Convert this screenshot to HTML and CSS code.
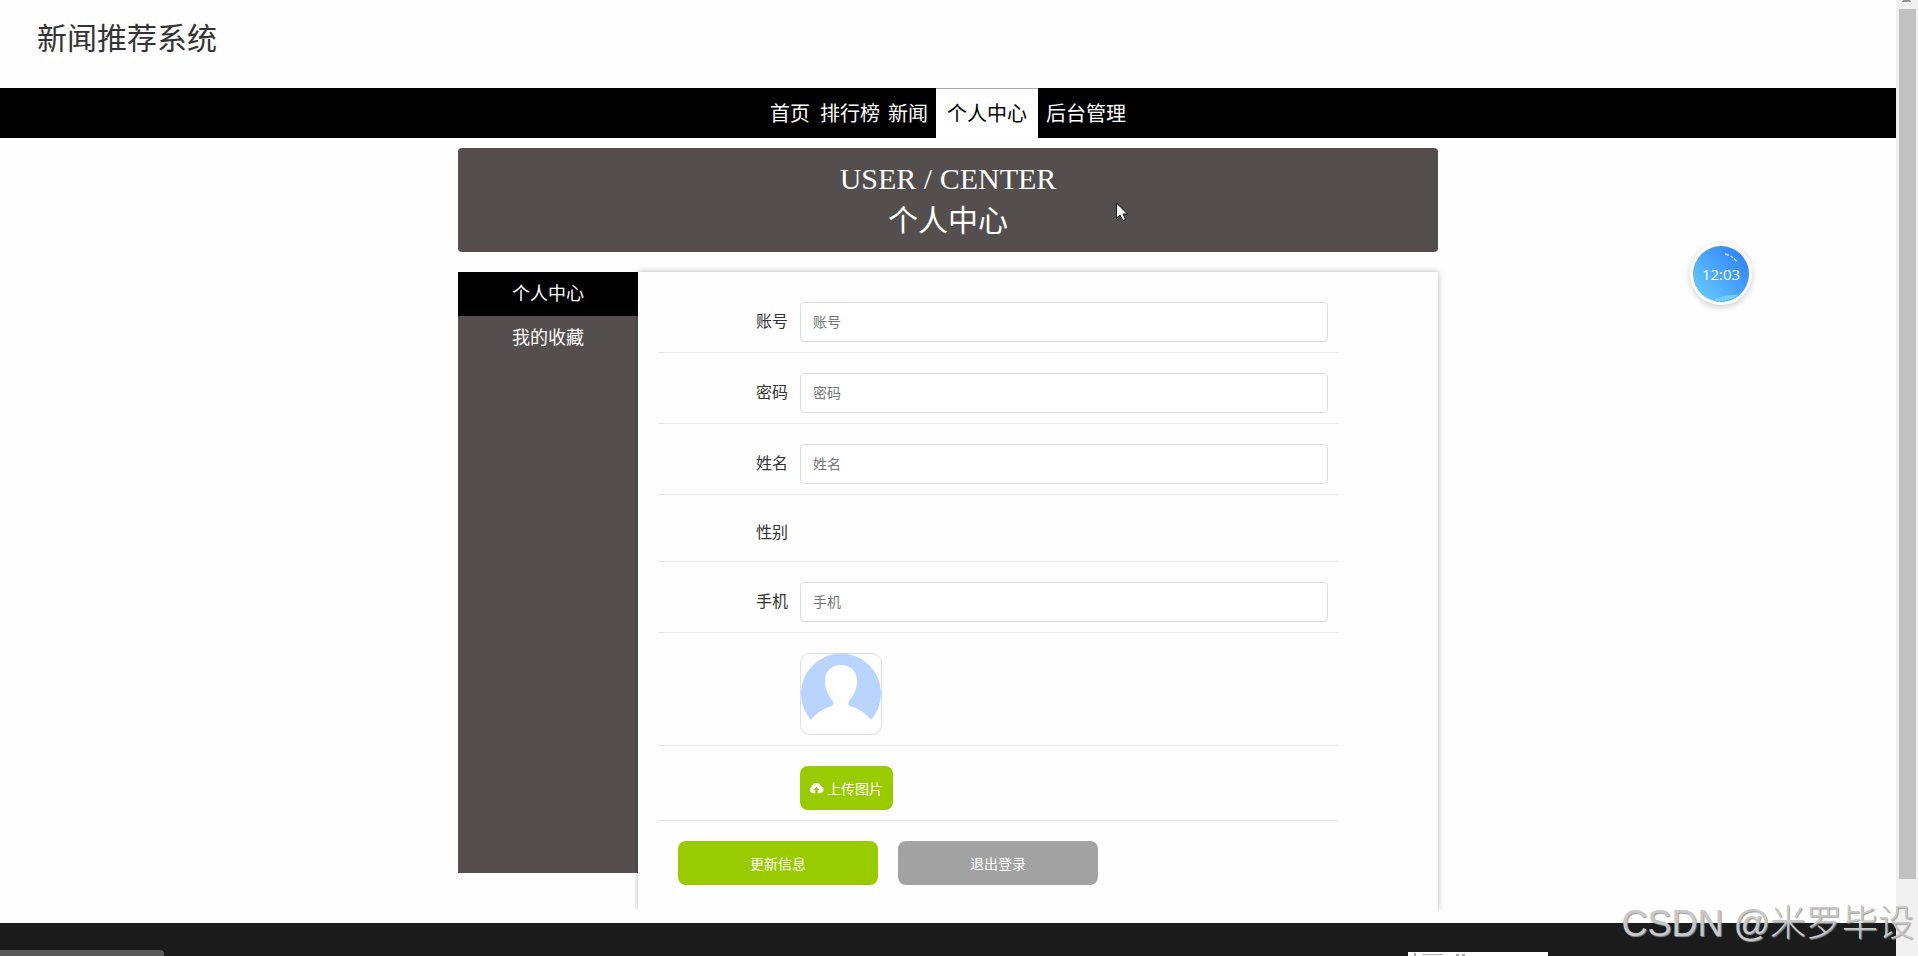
FILE: index.html
```html
<!DOCTYPE html>
<html lang="zh-CN">
<head>
<meta charset="utf-8">
<title>新闻推荐系统</title>
<link rel="stylesheet" href="styles.css">
</head>
<body>
<div class="window">
  <div class="page">
    <header class="header"><h1 class="site-title">新闻推荐系统</h1></header>
    <nav class="nav">
      <a class="nav-link" href="#">首页</a>
      <a class="nav-link" href="#">排行榜</a>
      <a class="nav-link" href="#">新闻</a>
      <a class="nav-link active" href="#">个人中心</a>
      <a class="nav-link" href="#">后台管理</a>
    </nav>
    <main class="container">
      <h2 class="banner"><span>USER / CENTER</span><span>个人中心</span></h2>
      <div class="columns">
        <aside class="side">
          <a class="side-link active" href="#">个人中心</a>
          <a class="side-link" href="#">我的收藏</a>
        </aside>
        <form class="panel">
          <div class="row"><label class="label" for="account">账号</label><input class="field" id="account" type="text" placeholder="账号"></div>
          <div class="row"><label class="label" for="password">密码</label><input class="field" id="password" type="password" placeholder="密码"></div>
          <div class="row"><label class="label" for="name">姓名</label><input class="field" id="name" type="text" placeholder="姓名"></div>
          <div class="row gender"><span class="label">性别</span></div>
          <div class="row"><label class="label" for="phone">手机</label><input class="field" id="phone" type="text" placeholder="手机"></div>
          <div class="row indent">
            <svg class="avatar" viewBox="0 0 80 80" role="img" aria-label="头像">
              <path fill="#b8d4ff" d="M10 66A40 40 0 1 1 70 66C65 59 57 54 49 52Q46 50 48 47C53 41 56 35 56 27C56 17 49 11 40 11S24 17 24 27C24 35 27 41 32 47Q33 50 31 52C23 54 15 59 10 66Z"/>
            </svg>
          </div>
          <div class="row indent">
            <button class="upload" type="button">
              <svg class="cloud" viewBox="0 0 16 12" aria-hidden="true"><path fill="#fff" d="M4 11.500A3.700 3.700 0 0 1 2.700 4.600A5.400 5.400 0 0 1 13 4.300A3.700 3.700 0 0 1 12.200 11.500H9.300V8.500H11.500L8 4.700L4.500 8.500H6.700V11.500Z"/></svg>
              上传图片
            </button>
          </div>
          <div class="actions">
            <button class="action" type="button">更新信息</button>
            <button class="action muted" type="button">退出登录</button>
          </div>
        </form>
      </div>
    </main>
    <footer class="footer"></footer>
  </div>
  <div class="scrollbar">
    <svg class="scroll-arrow" viewBox="0 0 10 3" aria-hidden="true"><path fill="#909090" d="M1 0H8V1H9V2H0V1H1Z"/></svg>
    <div class="thumb"></div>
  </div>
</div>
<div class="clock">
  <svg class="clock-face" viewBox="0 0 56 56" aria-hidden="true">
    <defs>
      <linearGradient id="sky" x1="0.1" y1="0.9" x2="0.9" y2="0.2"><stop offset="0" stop-color="#66c9fd"/><stop offset="1" stop-color="#3285f9"/></linearGradient>
      <clipPath id="disc"><circle cx="28" cy="28" r="28"/></clipPath>
    </defs>
    <g clip-path="url(#disc)">
      <rect width="56" height="56" fill="url(#sky)"/>
      <path fill="#71d0fb" d="M16 56C26 51 35 48 48 49V56Z"/>
      <path fill="none" stroke="#3c9fe9" stroke-dasharray="2 1" d="M24 56Q38 55 48 48"/>
      <path fill="none" stroke="#c4e2ff" stroke-width="1.500" stroke-dasharray="4 2 3 1" d="M32 8Q40 10 44 16"/>
    </g>
  </svg>
  <span class="clock-time">12:03</span>
</div>
<svg class="cursor" viewBox="0 0 12 19" aria-hidden="true"><path fill="#fff" stroke="#111" d="M.5 1V16.500L4 13L7 18.500L9.500 17.500L7 12H11.500Z"/></svg>
<div class="status"></div>
<div class="tip"><svg class="tip-marks" viewBox="0 0 60 4" aria-hidden="true"><path fill="#aaa" d="M6 1H8V4H6ZM15 2H35V3H15ZM48 2H51V4H48ZM54 2H57V4H54Z"/></svg></div>
<div class="watermark">CSDN @米罗毕设</div>
</body>
</html>
```

FILE: styles.css
```css
* { box-sizing: border-box; }
body {
  margin: 0;
  background: #fefefe;
  color: #333;
  font-family: "Liberation Sans", "Noto Sans CJK SC", sans-serif;
  font-size: 16px;
}
a { text-decoration: none; }
button, input { font-family: inherit; font-size: 14px; }
.window { display: flex; height: 100vh; overflow: hidden; }
.page { flex: 1; display: flex; flex-direction: column; }
.header { height: 88px; padding: 16px 37px; }
.site-title { margin: 0; font-size: 30px; font-weight: 400; line-height: 46px; }
.nav { display: flex; flex: none; justify-content: center; gap: 8px; height: 50px; background: #000; }
.nav-link { color: #fff; font-size: 20px; line-height: 52px; }
.nav-link:first-child { margin-right: 2px; }
.nav-link.active { padding: 0 11px; background: #fff; color: #000; border-top: 1px solid #aaa; line-height: 50px; }
.container { width: 980px; max-width: 100%; margin: 10px auto 13px; }
.banner {
  display: flex; flex-direction: column; align-items: center;
  margin: 0 0 20px; padding: 10px;
  border-radius: 4px; background: #544e4e; color: #fff;
  font: 400 30px/42px "Liberation Serif", "Noto Sans CJK SC", serif;
}
.columns { display: flex; align-items: flex-start; }
.side { width: 180px; min-height: 601px; background: #544e4e; }
.side-link { display: block; color: #fff; font-size: 18px; line-height: 44px; text-align: center; }
.side-link.active { background: #000; }
.panel {
  flex: 1; padding: 10px 100px 25px 20px;
  box-shadow: 0 0 6px rgba(0, 0, 0, .3);
  background: #fefefe;
  clip-path: inset(-10px -10px 0 -3px);
}
.row { display: flex; align-items: center; padding: 20px 10px 10px 0; border-bottom: 1px solid #e6e6e6; }
.indent { padding-left: 142px; }
.gender { height: 67px; }
.label { width: 130px; margin-right: 12px; text-align: right; line-height: 24px; }
.field { flex: 1; height: 40px; padding: 0 12px; border: 1px solid #dcdde0; border-radius: 4px; background: #fff; }
.field::placeholder { color: #777; }
.avatar { width: 82px; height: 82px; border: 1px solid #dcdde6; border-radius: 10px; background: #fff; }
.upload {
  display: flex; align-items: center; gap: 3px;
  height: 44px; padding: 0 10px 0 9px;
  border: 0; border-radius: 8px; background: #9c0; color: #fff;
}
.cloud { width: 15px; height: 12px; }
.actions { display: flex; gap: 20px; padding: 20px 20px 0; }
.action { width: 200px; height: 44px; border: 0; border-radius: 8px; background: #9c0; color: #fff; }
.action.muted { background: #a2a2a2; }
.footer { flex: 1; background: #1b1b1b; }
.scrollbar { display: flex; flex-direction: column; align-items: center; width: 22px; background: #f1f1f1; }
.scroll-arrow { width: 10px; height: 3px; margin-bottom: 6px; }
.thumb { width: 17px; height: 91%; background: #c1c1c1; }
.clock {
  position: absolute; top: 243px; right: 166px;
  display: grid; place-items: center;
  width: 62px; height: 62px; border-radius: 50%;
  background: #fff; box-shadow: 0 2px 6px rgba(0, 0, 0, .2);
}
.clock-face { grid-area: 1 / 1; width: 56px; height: 56px; }
.clock-time { grid-area: 1 / 1; color: #fff; font-family: "Open Sans", sans-serif; font-size: 15px; font-weight: 400; }
.cursor { position: absolute; left: 1116px; top: 202px; width: 12px; height: 19px; }
.status { position: absolute; left: 0; bottom: 0; width: 164px; height: 6px; border-radius: 0 4px 0 0; background: #595959; }
.tip { position: absolute; right: 370px; bottom: 0; width: 140px; height: 4px; background: #fff; }
.tip-marks { display: block; width: 60px; height: 4px; }
.watermark {
  position: absolute; right: 4px; bottom: 7px;
  color: #c8c8c8; font-size: 36px; font-weight: 300; line-height: 50px;
  text-shadow: 1px 1px 1px #999;
}
```
